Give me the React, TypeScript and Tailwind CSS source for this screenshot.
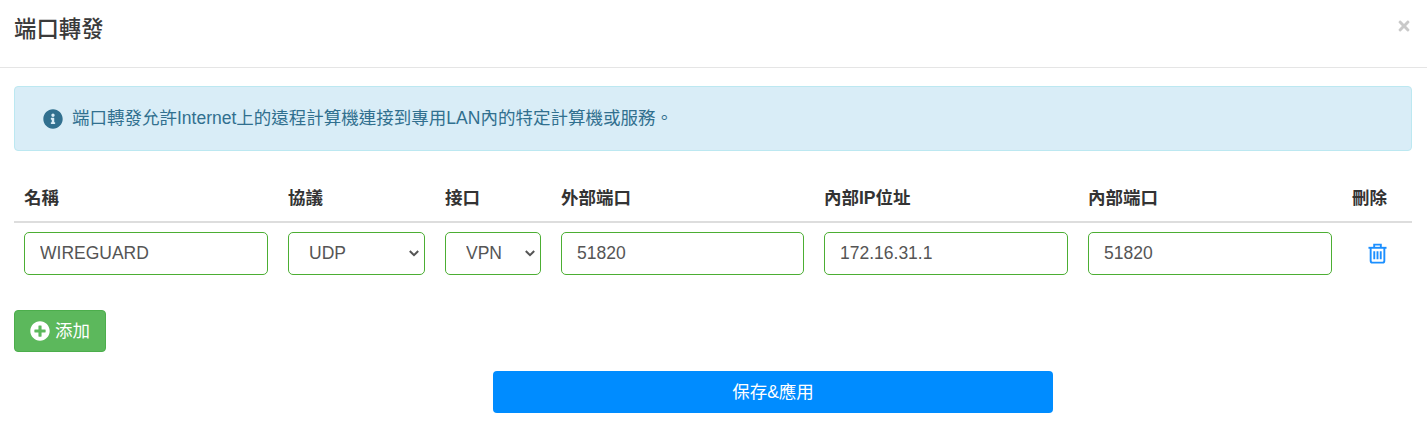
import React from "react";
import { FaInfoCircle, FaPlusCircle, FaTimes } from "react-icons/fa";

const font = "font-['Liberation_Sans','Noto_Sans_CJK_TC',sans-serif]";
const field = "block h-[43px] w-full rounded-[5px] border border-[#4cae33] bg-white text-[17.5px] text-[#555] outline-none";

function Trash() {
  return (
    <svg width="19" height="21" viewBox="0 0 20 21" fill="none" stroke="#1b8fff" strokeWidth="2" className="mx-auto block">
      <path d="M0.5 4.5h19" />
      <path d="M6.5 4.5V1.2h7v3.3" />
      <path d="M2.8 4.5v13.6a2 2 0 0 0 2 2h10.4a2 2 0 0 0 2-2V4.5" />
      <path d="M6.6 8v8.5M10 8v8.5M13.4 8v8.5" />
    </svg>
  );
}

function Select({ value, other }: { value: string; other: string }) {
  return (
    <div className="relative">
      <select defaultValue={value} className={`${field} appearance-none pl-[20px]`}>
        <option>{value}</option>
        <option>{other}</option>
      </select>
      <svg width="10" height="7" viewBox="0 0 10 7" fill="none" stroke="#555" strokeWidth="2" className="pointer-events-none absolute top-[18px] right-[6px]">
        <path d="M0.8 1l4.2 4.2L9.2 1" />
      </svg>
    </div>
  );
}

export default function App() {
  return (
    <div className={`${font} h-[442px] w-[1427px] overflow-hidden bg-white text-[#333]`}>
      <div className="relative h-[68px] border-b border-[#e5e5e5] px-[15px] pt-[15px]">
        <h4 className="text-[22.4px] leading-[30px] font-medium text-[#3a3a3a] -ml-[1px]">端口轉發</h4>
        <FaTimes className="absolute top-[18px] right-[15px] text-[16px] text-[#c9c9c9]" />
      </div>
      <div className="pt-[18px] pr-[15px] pl-[14px]">
        <div className="flex h-[65px] items-center gap-[9px] rounded-[4px] border border-[#bce8f1] bg-[#d9edf7] pl-[28px] text-[17.5px] text-[#31708f]">
          <FaInfoCircle className="text-[20px]" />
          <span>端口轉發允許Internet上的遠程計算機連接到專用LAN內的特定計算機或服務。</span>
        </div>
        <table className="mt-[28px] w-[1398px] table-fixed border-collapse">
          <colgroup>
            <col className="w-[264px]" />
            <col className="w-[157px]" />
            <col className="w-[116px]" />
            <col className="w-[263px]" />
            <col className="w-[264px]" />
            <col className="w-[264px]" />
            <col className="w-[70px]" />
          </colgroup>
          <thead>
            <tr className="h-[43px] border-b-2 border-[#ddd] text-left text-[17.5px] font-bold">
              <th className="pb-[4px] pl-[10px] align-middle">名稱</th>
              <th className="pb-[4px] pl-[10px] align-middle">協議</th>
              <th className="pb-[4px] pl-[10px] align-middle">接口</th>
              <th className="pb-[4px] pl-[10px] align-middle">外部端口</th>
              <th className="pb-[4px] pl-[10px] align-middle">內部IP位址</th>
              <th className="pb-[4px] pl-[10px] align-middle">內部端口</th>
              <th className="pb-[4px] pl-[10px] align-middle">刪除</th>
            </tr>
          </thead>
          <tbody>
            <tr>
              <td className="px-[10px] pt-[9px]">
                <input readOnly value="WIREGUARD" className={`${field} px-[15px]`} />
              </td>
              <td className="px-[10px] pt-[9px]">
                <Select value="UDP" other="TCP" />
              </td>
              <td className="px-[10px] pt-[9px]">
                <Select value="VPN" other="LAN" />
              </td>
              <td className="px-[10px] pt-[9px]">
                <input readOnly value="51820" className={`${field} px-[15px]`} />
              </td>
              <td className="px-[10px] pt-[9px]">
                <input readOnly value="172.16.31.1" className={`${field} px-[15px]`} />
              </td>
              <td className="px-[10px] pt-[9px]">
                <input readOnly value="51820" className={`${field} px-[15px]`} />
              </td>
              <td className="pt-[9px]">
                <Trash />
              </td>
            </tr>
          </tbody>
        </table>
        <button className="mt-[35px] flex h-[42px] w-[92px] items-center gap-[5px] rounded-[4px] border border-[#4cae4c] bg-[#5cb85c] pl-[15px] text-[17.5px] text-white">
          <FaPlusCircle className="text-[20px]" />
          <span>添加</span>
        </button>
        <div className="mt-[19px] pl-[479px]">
          <button className="h-[42px] w-[560px] rounded-[4px] bg-[#008cff] text-[17.5px] text-white">保存&amp;應用</button>
        </div>
      </div>
    </div>
  );
}
